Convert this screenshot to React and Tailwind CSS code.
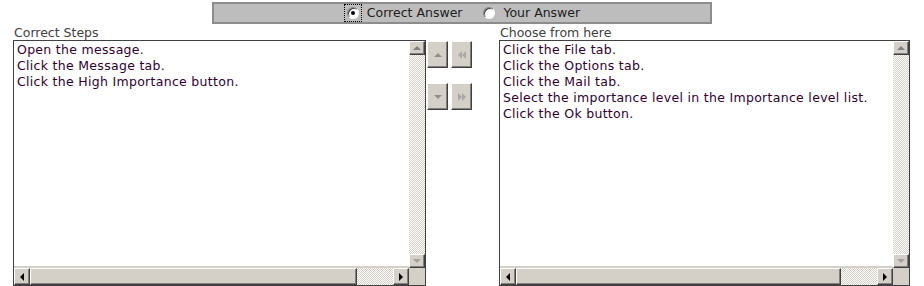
import { useState } from 'react'

const correct = ['Open the message.', 'Click the Message tab.', 'Click the High Importance button.']
const choices = [
  'Click the File tab.',
  'Click the Options tab.',
  'Click the Mail tab.',
  'Select the importance level in the Importance level list.',
  'Click the Ok button.',
]

const checker =
  'bg-[repeating-conic-gradient(#d4d0c8_0%_25%,#ffffff_0%_50%)] bg-size-[2px_2px]'
const raised =
  'bg-[#d4d0c8] border border-t-white border-l-white border-r-[#404040] border-b-[#404040] shadow-[inset_-1px_-1px_0_#808080]'

function Tri({ dir = 'up', color = '#808080' }) {
  const pts = {
    up: '0,4 4,0 8,4',
    down: '0,0 8,0 4,4',
    left: '4,0 4,8 0,4',
    right: '0,0 0,8 4,4',
  }[dir]
  const vertical = dir === 'up' || dir === 'down'
  return (
    <svg width={vertical ? 8 : 4} height={vertical ? 4 : 8} viewBox={vertical ? '0 0 8 4' : '0 0 4 8'}>
      <polygon points={pts} fill={color} />
    </svg>
  )
}

function Double({ dir }) {
  const a = dir === 'left' ? '4,0 4,8 0,4' : '0,0 0,8 4,4'
  const b = dir === 'left' ? '8,0 8,8 4,4' : '4,0 4,8 8,4'
  return (
    <svg width="8" height="8" viewBox="0 0 8 8">
      <polygon points={a} fill="#a8a8a8" />
      <polygon points={b} fill="#a8a8a8" />
    </svg>
  )
}

function ListBox({ items, width }) {
  return (
    <div className={`${width} h-[246px] border border-[#404040] flex flex-col bg-white`}>
      <div className="flex flex-1 min-h-0">
        <div className="flex-1 px-[3px] pt-[1px] leading-[16px] text-[12.5px] tracking-[0.3px] text-[#300030] whitespace-nowrap overflow-hidden border-b-2 border-[#d4d0c8]">
          {items.map((t) => (
            <div key={t}>{t}</div>
          ))}
        </div>
        <div className="w-[16px] flex flex-col">
          <div className={`h-[14px] flex items-center justify-center ${raised}`}>
            <Tri dir="up" />
          </div>
          <div className={`flex-1 ${checker}`} />
          <div className={`h-[14px] flex items-center justify-center ${raised}`}>
            <Tri dir="down" color="#a0a0a0" />
          </div>
        </div>
      </div>
      <div className="h-[17px] flex bg-[#d4d0c8]">
        <div className="flex-1 flex">
          <div className={`w-[16px] flex items-center justify-center ${raised}`}>
            <Tri dir="left" color="#000" />
          </div>
          <div className={`flex-1 ${raised}`} />
          <div className={`w-[36px] ${checker}`} />
          <div className={`w-[16px] flex items-center justify-center ${raised}`}>
            <Tri dir="right" color="#000" />
          </div>
        </div>
        <div className="w-[16px] bg-[#d4d0c8]" />
      </div>
    </div>
  )
}

function Radio({ checked, focused, label, onClick }) {
  return (
    <label className="flex items-center gap-[5px] cursor-pointer" onClick={onClick}>
      <span className={`p-[2px] ${focused ? 'border border-dotted border-black' : 'border border-transparent'}`}>
        <span className="w-[12px] h-[12px] rounded-full bg-white border border-t-[#808080] border-l-[#808080] border-r-white border-b-white shadow-[inset_1px_1px_0_#404040] flex items-center justify-center">
          {checked && <span className="w-[4px] h-[4px] rounded-full bg-black" />}
        </span>
      </span>
      <span>{label}</span>
    </label>
  )
}

export default function App() {
  const [mode, setMode] = useState('correct')

  return (
    <div className="w-[924px] h-[286px] bg-white font-['DejaVu_Sans',Verdana,sans-serif] text-[12.5px] overflow-hidden">
      <div className="flex justify-center pt-[2px]">
        <div className="w-[500px] h-[22px] bg-[#bdbdbd] border-2 border-[#8c8c8c] flex items-center justify-center gap-[18px] text-[#202020]">
          <Radio checked={mode === 'correct'} focused label="Correct Answer" onClick={() => setMode('correct')} />
          <Radio checked={mode === 'yours'} label="Your Answer" onClick={() => setMode('yours')} />
        </div>
      </div>

      <div className="flex pl-[13px] pt-[2px]">
        <div className="flex flex-col">
          <div className="pl-[1px] h-[14px] leading-[14px] text-[#404040]">Correct Steps</div>
          <ListBox items={correct} width="w-[413px]" />
        </div>

        <div className="pl-[1px] pt-[15px] flex flex-col gap-[15px] w-[73px]">
          <div className="flex gap-[3px]">
            <button className={`w-[21px] h-[27px] flex items-center justify-center ${raised}`}>
              <Tri dir="up" color="#909090" />
            </button>
            <button className={`w-[21px] h-[27px] flex items-center justify-center ${raised}`}>
              <Double dir="left" />
            </button>
          </div>
          <div className="flex gap-[3px]">
            <button className={`w-[21px] h-[27px] flex items-center justify-center ${raised}`}>
              <Tri dir="down" color="#909090" />
            </button>
            <button className={`w-[21px] h-[27px] flex items-center justify-center ${raised}`}>
              <Double dir="right" />
            </button>
          </div>
        </div>

        <div className="flex flex-col">
          <div className="pl-[1px] h-[14px] leading-[14px] text-[#404040]">Choose from here</div>
          <ListBox items={choices} width="w-[411px]" />
        </div>
      </div>
    </div>
  )
}
